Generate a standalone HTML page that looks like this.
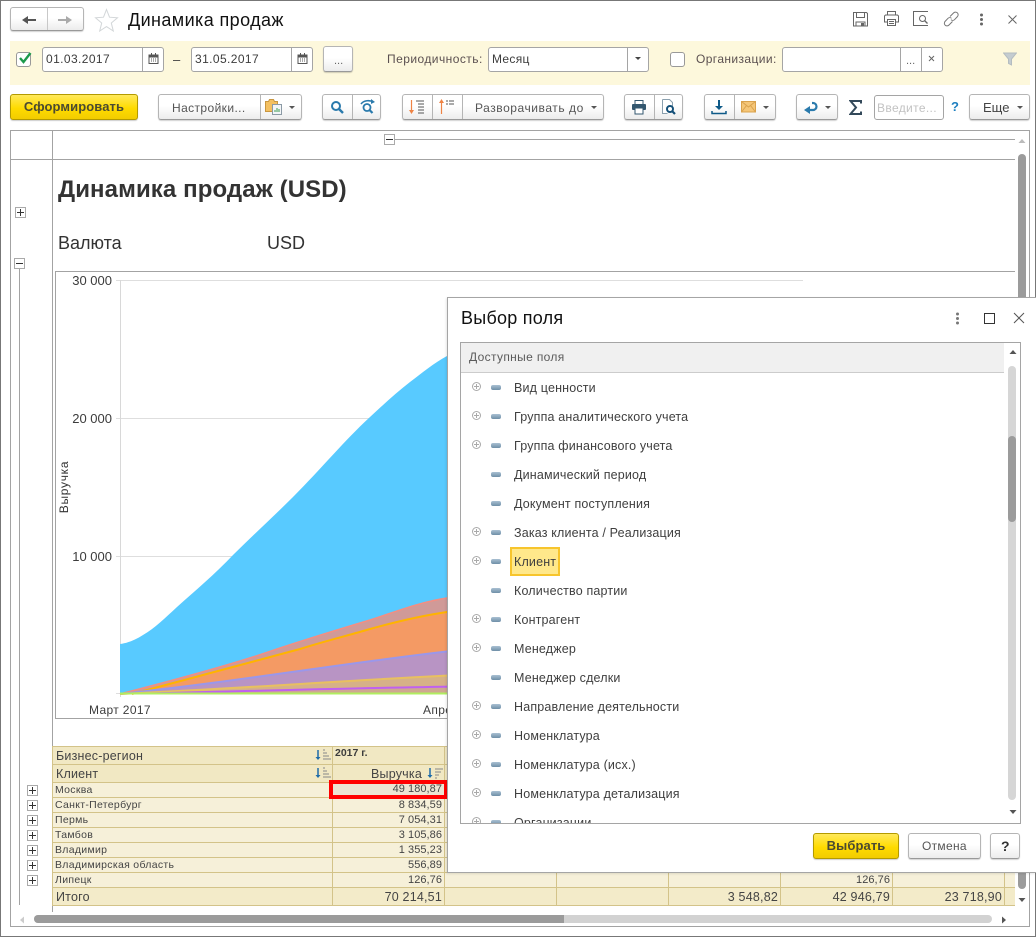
<!DOCTYPE html>
<html lang="ru"><head><meta charset="utf-8"><title>Динамика продаж</title>
<style>
html,body{margin:0;padding:0;background:#fff}
#p{position:relative;width:1036px;height:937px;overflow:hidden;background:#fff;font-family:"Liberation Sans",Arial,sans-serif;font-size:12px;color:#3c3c3c}
#p div,#p span,#p svg{position:absolute}
.t{white-space:nowrap;line-height:16px}
.b{box-sizing:border-box;border:1px solid #b5b5b5;border-bottom-color:#999;border-radius:3px;background:linear-gradient(#fff 0,#fff 45%,#ececec 100%);box-shadow:0 1px 1px rgba(0,0,0,.18)}
.y{box-sizing:border-box;border:1px solid #b39a00;border-radius:3px;background:linear-gradient(#ffe95a,#ffdb00 55%,#f2cc00);box-shadow:0 1px 1px rgba(0,0,0,.2);text-align:center;font-weight:bold;color:#4a4a32;font-size:13px;line-height:24px;letter-spacing:.1px}
.i{box-sizing:border-box;border:1px solid #a5a5a5;border-radius:3px;background:#fff}
.v{width:1px;background:#b5b5b5}
.l{background:#a3a3a3}
.c{white-space:nowrap;line-height:15px;font-size:10.5px;color:#444;letter-spacing:.3px}
.n{white-space:nowrap;line-height:15px;font-size:11px;color:#444;text-align:right;letter-spacing:.05px}
.h{white-space:nowrap;font-size:12.5px;color:#444;line-height:18px;letter-spacing:.2px}
.pb{box-sizing:border-box;width:11px;height:11px;border:1px solid #aaa;background:#fff}
.pb:before{content:"";position:absolute;left:1px;right:1px;top:4px;height:1px;background:#333}
.pb.pl:after{content:"";position:absolute;top:1px;bottom:1px;left:4px;width:1px;background:#333}
.it{white-space:nowrap;font-size:12.5px;color:#3f3f3f;line-height:16px;left:514px;letter-spacing:.17px;margin-top:1px}
.ex{box-sizing:border-box;left:472px;width:9px;height:9px;border:1px solid #aaa;border-radius:50%;background:linear-gradient(#aaa,#aaa) center/5px 1px no-repeat,linear-gradient(#aaa,#aaa) center/1px 5px no-repeat,#fff}
.mi{left:491px;width:10px;height:5px;border-radius:2px;background:linear-gradient(#a9c0d2,#6f8fa8);margin-top:-1px}
.ar{width:0;height:0;border-left:3px solid transparent;border-right:3px solid transparent;border-top:3px solid #555}
</style></head><body><div id="p">

<!-- window frame -->
<div style="left:0;top:0;width:1036px;height:1px;background:#777"></div>
<div style="left:0;top:0;width:1px;height:937px;background:#777"></div>
<div style="left:1035px;top:0;width:1px;height:937px;background:#777"></div>
<div style="left:0;top:936px;width:1036px;height:1px;background:#777"></div>

<!-- header -->
<div class="b" style="left:10px;top:7px;width:74px;height:24px"></div>
<div class="v" style="left:47px;top:8px;height:22px;background:#c8c8c8"></div>
<svg style="left:21px;top:14px" width="60" height="12"><path d="M4 6h11" stroke="#555" stroke-width="2"/><path d="M7 2L1 6l6 4z" fill="#555"/><path d="M37 6h11" stroke="#aaa" stroke-width="2"/><path d="M45 2l6 4-6 4z" fill="#aaa"/></svg>
<svg style="left:94px;top:8px" width="25" height="24"><path d="M12.500 1.500l3 7.700 8 .6-6.200 5.200 2 8-6.800-4.400-6.800 4.400 2-8L1.500 9.800l8-.6z" fill="none" stroke="#d2d6d8" stroke-width="1"/></svg>
<div class="t" style="left:128px;top:10px;font-size:18px;line-height:21px;color:#111;letter-spacing:.4px">Динамика продаж</div>

<svg style="left:852px;top:12px" width="17" height="15"><path d="M1.500.5h13l1 1v12.500h-14zM4.500.5v5h8v-5M4 14v-4h9v4" fill="none" stroke="#666"/><rect x="9" y="11" width="3" height="3" fill="#666"/></svg>
<svg style="left:883px;top:11px" width="17" height="16"><path d="M4.500 4V.5h8V4M4 11H1.500V5l1-1h12l1 1v6H13M4.500 8.500h8v6h-8z" fill="none" stroke="#666"/><path d="M6 10.500h5M6 12.500h5" stroke="#666"/></svg>
<svg style="left:913px;top:11px" width="17" height="16"><path d="M15 .5H.5v14H15" fill="none" stroke="#666"/><circle cx="9.500" cy="7.500" r="3" fill="none" stroke="#666"/><path d="M11.500 9.500l3 3" stroke="#666" stroke-width="1.300"/></svg>
<svg style="left:943px;top:11px" width="17" height="16"><path d="M7 5.500L10.500 2a2.500 2.500 0 0 1 4 3.500l-3 3.200a2.500 2.500 0 0 1-3.500 0M9.500 10.500L6 14a2.500 2.500 0 0 1-4-3.500l3-3.200a2.500 2.500 0 0 1 3.500 0" fill="none" stroke="#777"/></svg>
<svg style="left:979px;top:13px" width="5" height="13"><circle cx="2.500" cy="2" r="1.500" fill="#666"/><circle cx="2.500" cy="6.500" r="1.500" fill="#666"/><circle cx="2.500" cy="11" r="1.500" fill="#666"/></svg>
<svg style="left:1007px;top:14px" width="11" height="11"><path d="M1.500 1.500l8 8M9.500 1.500l-8 8" stroke="#666"/></svg>

<!-- filter band -->
<div style="left:10px;top:41px;width:1020px;height:44px;background:#fdf8dc"></div>
<div class="i" style="left:16px;top:52px;width:15px;height:15px;border-color:#999"></div>
<svg style="left:18px;top:51px" width="15" height="14"><path d="M2 7l3.500 4L12.500 2" fill="none" stroke="#1d9a4c" stroke-width="2.400"/></svg>
<div class="i" style="left:42px;top:47px;width:122px;height:25px"></div>
<div class="v" style="left:142px;top:48px;height:23px;background:#a5a5a5"></div>
<div class="t" style="left:46px;top:51px;letter-spacing:.4px">01.03.2017</div>
<svg style="left:148px;top:53px" width="11" height="11"><rect x="1" y="2" width="9" height="8.500" fill="none" stroke="#555"/><path d="M1 3.500h9" stroke="#555" stroke-width="2"/><path d="M3 6h1M5 6h1M7 6h1M3 8h1M5 8h1M7 8h1" stroke="#555"/><path d="M3.500 0v2M7.500 0v2" stroke="#555"/></svg>
<div class="t" style="left:173px;top:52px;font-size:13px">–</div>
<div class="i" style="left:191px;top:47px;width:122px;height:25px"></div>
<div class="v" style="left:291px;top:48px;height:23px;background:#a5a5a5"></div>
<div class="t" style="left:195px;top:51px;letter-spacing:.4px">31.05.2017</div>
<svg style="left:297px;top:53px" width="11" height="11"><rect x="1" y="2" width="9" height="8.500" fill="none" stroke="#555"/><path d="M1 3.500h9" stroke="#555" stroke-width="2"/><path d="M3 6h1M5 6h1M7 6h1M3 8h1M5 8h1M7 8h1" stroke="#555"/><path d="M3.500 0v2M7.500 0v2" stroke="#555"/></svg>
<div class="b" style="left:323px;top:46px;width:30px;height:26px"></div>
<div class="t" style="left:334px;top:53px;font-size:11px;color:#666">...</div>
<div class="t" style="left:387px;top:51px;color:#5b5050;letter-spacing:.45px">Периодичность:</div>
<div class="i" style="left:488px;top:47px;width:161px;height:25px"></div>
<div class="v" style="left:627px;top:48px;height:23px;background:#a5a5a5"></div>
<div class="t" style="left:492px;top:51px;letter-spacing:.3px">Месяц</div>
<div class="ar" style="left:635px;top:57px;border-top-color:#444"></div>
<div class="i" style="left:670px;top:52px;width:15px;height:15px;border-color:#999"></div>
<div class="t" style="left:696px;top:51px;color:#5b5050;letter-spacing:.4px">Организации:</div>
<div class="i" style="left:782px;top:47px;width:161px;height:25px"></div>
<div class="v" style="left:900px;top:48px;height:23px;background:#a5a5a5"></div>
<div class="v" style="left:921px;top:48px;height:23px;background:#a5a5a5"></div>
<div class="t" style="left:906px;top:53px;font-size:11px;color:#666">...</div>
<svg style="left:928px;top:55px" width="7" height="7"><path d="M1 1l5 5M6 1L1 6" stroke="#666"/></svg>
<svg style="left:1003px;top:52px" width="14" height="14"><path d="M.5 1h13L8.500 7v6l-3-1.500V7z" fill="#c4ccd0" stroke="#b4bcc0"/></svg>

<!-- toolbar -->
<div class="y" style="left:10px;top:94px;width:128px;height:26px">Сформировать</div>
<div class="b" style="left:158px;top:94px;width:144px;height:26px"></div>
<div class="v" style="left:260px;top:95px;height:24px"></div>
<div class="t" style="left:172px;top:100px;color:#555;letter-spacing:.4px">Настройки...</div>
<svg style="left:265px;top:98px" width="19" height="18"><path d="M.5 3.500h3l1-2h4l1 2h3v10H.5z" fill="#f4c060" stroke="#c89640"/><rect x="7.500" y="6.500" width="9" height="10" fill="#f3f5f7" stroke="#8b9aa5"/><path d="M10 14v-2M12 14v-4M14 14v-3" stroke="#3a9a50"/></svg>
<div class="ar" style="left:289px;top:106px"></div>

<div class="b" style="left:322px;top:94px;width:59px;height:26px"></div>
<div class="v" style="left:352px;top:95px;height:24px"></div>
<svg style="left:330px;top:100px" width="15" height="15"><circle cx="6" cy="6" r="4" fill="none" stroke="#2a7aac" stroke-width="2"/><path d="M9 9l4 4" stroke="#2a7aac" stroke-width="2.400"/></svg>
<svg style="left:360px;top:99px" width="16" height="16"><path d="M1 5C4 1 10 1 13 3" fill="none" stroke="#2a7aac" stroke-width="1.600"/><path d="M11 0l4 3-4 2z" fill="#2a7aac"/><circle cx="7" cy="8.500" r="3.500" fill="none" stroke="#2a7aac" stroke-width="1.800"/><path d="M9.500 11l3 3" stroke="#2a7aac" stroke-width="2.200"/></svg>

<div class="b" style="left:402px;top:94px;width:202px;height:26px"></div>
<div class="v" style="left:432px;top:95px;height:24px"></div>
<div class="v" style="left:462px;top:95px;height:24px"></div>
<svg style="left:409px;top:99px" width="18" height="16"><path d="M2.500 1v12" stroke="#ee8345" stroke-width="1.200"/><path d="M0 11l2.500 4L5 11z" fill="#ee8345"/><path d="M7 2h8M9 5h6M9 8h6M9 11h6M9 14h6" stroke="#555"/></svg>
<svg style="left:438px;top:98px" width="18" height="16"><path d="M3.500 3v13" stroke="#ee8345" stroke-width="1.200"/><path d="M1 5l2.500-4L6 5z" fill="#ee8345"/><path d="M8 3h2M8 6h2M11 3h5M11 6h5" stroke="#555"/></svg>
<div class="t" style="left:475px;top:100px;color:#555;letter-spacing:.55px">Разворачивать до</div>
<div class="ar" style="left:591px;top:106px"></div>

<div class="b" style="left:624px;top:94px;width:59px;height:26px"></div>
<div class="v" style="left:654px;top:95px;height:24px"></div>
<svg style="left:631px;top:100px" width="16" height="15"><path d="M4 4V.5h8V4" fill="#fff" stroke="#33576f"/><rect x="1" y="4" width="14" height="6" rx="1" fill="#33576f"/><rect x="4" y="8" width="8" height="6" fill="#fff" stroke="#33576f"/></svg>
<svg style="left:661px;top:99px" width="16" height="16"><path d="M1.500.5h7l3 3V7M1.500.5v14h5" fill="#fff" stroke="#8ba0ae"/><circle cx="9" cy="10" r="3" fill="#fff" stroke="#134f78" stroke-width="2"/><path d="M11 12l3 3" stroke="#134f78" stroke-width="2.200"/></svg>

<div class="b" style="left:704px;top:94px;width:72px;height:26px"></div>
<div class="v" style="left:734px;top:95px;height:24px"></div>
<svg style="left:711px;top:100px" width="16" height="15"><path d="M8 0v7" stroke="#0e5a88" stroke-width="2"/><path d="M4 6h8l-4 4z" fill="#0e5a88"/><path d="M1 11v2.500h14V11" fill="none" stroke="#0e5a88" stroke-width="1.500"/></svg>
<svg style="left:741px;top:101px" width="15" height="12"><rect x=".5" y=".5" width="14" height="10.500" fill="#f5c678" stroke="#d9a24d"/><path d="M.5.5l7 5.500 7-5.500M.5 11l5-6.500M14.500 11l-5-6.500" fill="none" stroke="#d9a24d"/></svg>
<div class="ar" style="left:763px;top:106px"></div>

<div class="b" style="left:796px;top:94px;width:42px;height:26px"></div>
<svg style="left:804px;top:100px" width="16" height="14"><path d="M5 10h4a3.500 3.500 0 0 0 0-7H8" fill="none" stroke="#2a7aac" stroke-width="2.200"/><path d="M6 6L0 10l6 4z" fill="#2a7aac"/></svg>
<div class="ar" style="left:825px;top:106px"></div>
<svg style="left:849px;top:100px" width="13" height="15"><path d="M12 3.500V1H1.500l5.500 6.500L1.500 14H12v-2.500" fill="none" stroke="#33495a" stroke-width="2"/></svg>
<div class="i" style="left:874px;top:95px;width:70px;height:25px"></div>
<div class="t" style="left:877px;top:100px;color:#c2c2c2;letter-spacing:.35px">Введите...</div>
<div class="t" style="left:951px;top:99px;color:#1d7fc0;font-size:13px;font-weight:bold">?</div>
<div class="b" style="left:969px;top:94px;width:61px;height:26px"></div>
<div class="t" style="left:983px;top:100px;font-size:13px;color:#444">Еще</div>
<div class="ar" style="left:1017px;top:106px"></div>

<!-- spreadsheet frame -->
<div class="l" style="left:10px;top:130px;width:1020px;height:1px"></div>
<div class="l" style="left:10px;top:130px;width:1px;height:797px"></div>
<div class="l" style="left:1029px;top:130px;width:1px;height:797px"></div>
<div class="l" style="left:10px;top:926px;width:1020px;height:1px"></div>
<div class="l" style="left:52px;top:130px;width:1px;height:782px"></div>
<div class="l" style="left:10px;top:159px;width:1005px;height:1px"></div>
<div class="pb" style="left:384px;top:134px"></div>
<div class="l" style="left:395px;top:139px;width:620px;height:1px"></div>

<div class="pb pl" style="left:15px;top:207px"></div>
<div class="pb" style="left:14px;top:258px"></div>
<div class="l" style="left:19px;top:269px;width:1px;height:636px"></div>

<div class="t" style="left:58px;top:176px;font-size:24px;line-height:28px;font-weight:bold;color:#333;letter-spacing:.1px">Динамика продаж (USD)</div>
<div class="t" style="left:58px;top:233px;font-size:18px;line-height:20px;color:#333">Валюта</div>
<div class="t" style="left:267px;top:233px;font-size:18px;line-height:20px;color:#333">USD</div>

<!-- chart -->
<div class="l" style="left:55px;top:271px;width:960px;height:1px"></div>
<div class="l" style="left:55px;top:271px;width:1px;height:448px"></div>
<div class="l" style="left:55px;top:718px;width:400px;height:1px"></div>
<svg style="left:0;top:0" width="1036" height="937">
<path d="M116 280.500H803M116 418.500H803M116 556.500H803M116 693.500H803" stroke="#dedede"/>
<path d="M120.500 280V697" stroke="#d8d8d8"/>
<path d="M120 644C128 643 135 640 143 635C155 628 165 618 177 607C196 590 215 574 233 555C253 535 273 517 293 497C320 470 345 440 370 417C384 404 397 392 410 382C422 373 434 363 447 356L460 349V694H120Z" fill="#58caff"/>
<path d="M120 694C190 676 240 662 277 649C310 638 340 629 370 620C395 612 420 602 447 598L460 596V694Z" fill="#d09a98"/>
<path d="M120 694C190 676 240 662 277 649C310 638 340 629 370 620C395 612 420 602 447 598L460 596" fill="none" stroke="#f48e82" stroke-width="1.500"/>
<path d="M132 694C200 676 260 660 300 649C325 641 350 635 370 629C395 622 420 616 447 612L460 611V694Z" fill="#f49a64"/>
<path d="M132 694C200 676 260 660 300 649C325 641 350 635 370 629C395 622 420 616 447 612L460 611" fill="none" stroke="#ffb400" stroke-width="2"/>
<path d="M120 694C250 680 350 662 460 650V694Z" fill="#b894c4"/>
<path d="M120 694C250 680 350 662 460 650" fill="none" stroke="#9b97ea" stroke-width="2"/>
<path d="M120 694C250 688 350 680 460 675V694Z" fill="#d6b188"/>
<path d="M120 694C250 688 350 680 460 675" fill="none" stroke="#e8c060" stroke-width="2"/>
<path d="M150 694C250 691 350 688 460 686V694Z" fill="#cfa890"/>
<path d="M150 693.500C250 691 350 688 460 686.500" fill="none" stroke="#c060f0" stroke-width="2"/>
<path d="M120 693.500H460" stroke="#b0ee60" stroke-width="2"/>
</svg>
<div class="t" style="left:52px;top:273px;width:60px;text-align:right;font-size:13px;color:#3c3c3c">30 000</div>
<div class="t" style="left:52px;top:411px;width:60px;text-align:right;font-size:13px;color:#3c3c3c">20 000</div>
<div class="t" style="left:52px;top:549px;width:60px;text-align:right;font-size:13px;color:#3c3c3c">10 000</div>
<div class="t" style="left:34px;top:479px;width:60px;text-align:center;font-size:12px;color:#333;transform:rotate(-90deg);letter-spacing:.7px">Выручка</div>
<div class="t" style="left:89px;top:702px;font-size:12px;color:#3c3c3c;letter-spacing:.35px">Март 2017</div>
<div class="t" style="left:423px;top:702px;font-size:12px;color:#3c3c3c;letter-spacing:.35px">Апрель</div>

<!-- table -->
<div style="left:53px;top:747px;width:962px;height:35px;background:#f1e8c3"></div>
<div style="left:53px;top:782px;width:962px;height:106px;background:#f6f0d9"></div>
<div style="left:53px;top:888px;width:962px;height:17px;background:#f3ebc9"></div>
<svg style="left:0;top:0" width="1036" height="937">
<g stroke="#d3c389" fill="none">
<path d="M53 746.500H1015M53 764.500H1015M53 782.500H1015M53 797.500H1015M53 812.500H1015M53 827.500H1015M53 842.500H1015M53 857.500H1015M53 872.500H1015M53 887.500H1015M53 905.500H1015"/>
<path d="M52.500 746V906M332.500 746V906M444.500 746V906M556.500 746V906M668.500 746V906M780.500 746V906M892.500 746V906M1004.500 746V906"/>
</g>
<g fill="none">
<path d="M318 750v9" stroke="#1e6ba8" stroke-width="1.500"/><path d="M315.500 757h5l-2.500 3z" fill="#1e6ba8"/><path d="M323 750h2M323 753h4M323 756h6M323 759h8" stroke="#888"/>
<path d="M318 768v9" stroke="#1e6ba8" stroke-width="1.500"/><path d="M315.500 775h5l-2.500 3z" fill="#1e6ba8"/><path d="M323 768h2M323 771h4M323 774h6M323 777h8" stroke="#888"/>
<path d="M430 768v9" stroke="#1e6ba8" stroke-width="1.500"/><path d="M427.500 775h5l-2.500 3z" fill="#1e6ba8"/><path d="M435 769h8M435 772h6M435 775h4M435 778h2" stroke="#888"/>
</g>
</svg>
<div class="h" style="left:56px;top:747px">Бизнес-регион</div>
<div class="h" style="left:56px;top:765px">Клиент</div>
<div class="t" style="left:335px;top:745px;font-size:10.500px;font-weight:bold;color:#3c3c3c">2017 г.</div>
<div class="h" style="left:371px;top:765px">Выручка</div>

<div style="left:329px;top:780px;width:119px;height:19px;box-sizing:border-box;border:4px solid #f00;background:#ece5d3"></div>

<div class="c" style="left:55px;top:783px">Москва</div>
<div class="c" style="left:55px;top:798px">Санкт-Петербург</div>
<div class="c" style="left:55px;top:813px">Пермь</div>
<div class="c" style="left:55px;top:828px">Тамбов</div>
<div class="c" style="left:55px;top:843px">Владимир</div>
<div class="c" style="left:55px;top:858px">Владимирская область</div>
<div class="c" style="left:55px;top:873px">Липецк</div>
<div class="n" style="left:341px;width:101px;top:782px">49 180,87</div>
<div class="n" style="left:341px;width:101px;top:798px">8 834,59</div>
<div class="n" style="left:341px;width:101px;top:813px">7 054,31</div>
<div class="n" style="left:341px;width:101px;top:828px">3 105,86</div>
<div class="n" style="left:341px;width:101px;top:843px">1 355,23</div>
<div class="n" style="left:341px;width:101px;top:858px">556,89</div>
<div class="n" style="left:341px;width:101px;top:873px">126,76</div>
<div class="n" style="left:789px;width:101px;top:873px">126,76</div>
<div class="h" style="left:56px;top:888px">Итого</div>
<div class="h" style="left:341px;width:101px;top:888px;text-align:right">70 214,51</div>
<div class="h" style="left:677px;width:101px;top:888px;text-align:right">3 548,82</div>
<div class="h" style="left:789px;width:101px;top:888px;text-align:right">42 946,79</div>
<div class="h" style="left:901px;width:101px;top:888px;text-align:right">23 718,90</div>

<div class="pb pl" style="left:27px;top:785px"></div>
<div class="pb pl" style="left:27px;top:800px"></div>
<div class="pb pl" style="left:27px;top:815px"></div>
<div class="pb pl" style="left:27px;top:830px"></div>
<div class="pb pl" style="left:27px;top:845px"></div>
<div class="pb pl" style="left:27px;top:860px"></div>
<div class="pb pl" style="left:27px;top:875px"></div>

<!-- main scrollbars -->
<svg style="left:1018px;top:138px" width="8" height="6"><path d="M4 1l3.500 4H.5z" fill="#bbb"/></svg>
<div style="left:1018px;top:154px;width:8px;height:735px;background:#9b9b9b;border-radius:4px"></div>
<svg style="left:1018px;top:897px" width="8" height="6"><path d="M4 5L.5 1h7z" fill="#555"/></svg>
<svg style="left:19px;top:916px" width="6" height="8"><path d="M1 4l4-3.500v7z" fill="#ccc"/></svg>
<div style="left:34px;top:915px;width:958px;height:8px;background:#d2d2d2;border-radius:4px"></div>
<div style="left:34px;top:915px;width:530px;height:8px;background:#9b9b9b;border-radius:4px 0 0 4px"></div>
<svg style="left:1001px;top:916px" width="6" height="8"><path d="M5 4L1 .5v7z" fill="#555"/></svg>

<!-- dialog -->
<div style="left:447px;top:297px;width:589px;height:576px;box-sizing:border-box;border:1px solid #a5a5a5;border-right:0;background:#fff;box-shadow:-1px 1px 2px rgba(0,0,0,.1)"></div>
<div class="t" style="left:461px;top:308px;font-size:18px;line-height:21px;color:#111;letter-spacing:.25px">Выбор поля</div>
<svg style="left:955px;top:312px" width="5" height="13"><circle cx="2.500" cy="2" r="1.500" fill="#777"/><circle cx="2.500" cy="6.500" r="1.500" fill="#777"/><circle cx="2.500" cy="11" r="1.500" fill="#777"/></svg>
<div style="left:984px;top:313px;width:9px;height:9px;box-sizing:content-box;border:1px solid #333"></div>
<svg style="left:1013px;top:312px" width="12" height="12"><path d="M1 1l10 10M11 1L1 11" stroke="#555"/></svg>

<div style="left:460px;top:342px;width:561px;height:482px;box-sizing:border-box;border:1px solid #a5a5a5;overflow:hidden;background:#fff">
<div style="left:0;top:0;width:543px;height:29px;background:#f0f0f0;border-bottom:1px solid #ccc"></div>
<div class="t" style="left:8px;top:6px;color:#5b5b5b;letter-spacing:.35px">Доступные поля</div>
<div class="t" style="left:53px;top:472px;color:#3f3f3f;font-size:12.500px;letter-spacing:.17px">Организации</div>
<div class="mi" style="left:30px;top:478px"></div>
<div class="ex" style="left:11px;top:474px"></div>
</div>
<svg style="left:1009px;top:349px" width="8" height="6"><path d="M4 1l3.500 4H.5z" fill="#555"/></svg>
<div style="left:1008px;top:366px;width:8px;height:434px;background:#d6d6d6;border-radius:4px"></div>
<div style="left:1008px;top:436px;width:8px;height:86px;background:#9b9b9b;border-radius:4px"></div>
<svg style="left:1009px;top:809px" width="8" height="6"><path d="M4 5L.5 1h7z" fill="#555"/></svg>

<div class="ex" style="top:382px"></div><div class="mi" style="top:386px"></div><div class="it" style="top:379px">Вид ценности</div>
<div class="ex" style="top:411px"></div><div class="mi" style="top:415px"></div><div class="it" style="top:408px">Группа аналитического учета</div>
<div class="ex" style="top:440px"></div><div class="mi" style="top:444px"></div><div class="it" style="top:437px">Группа финансового учета</div>
<div class="mi" style="top:473px"></div><div class="it" style="top:466px">Динамический период</div>
<div class="mi" style="top:502px"></div><div class="it" style="top:495px">Документ поступления</div>
<div class="ex" style="top:527px"></div><div class="mi" style="top:531px"></div><div class="it" style="top:524px">Заказ клиента / Реализация</div>
<div class="ex" style="top:556px"></div><div class="mi" style="top:560px"></div>
<div style="left:510px;top:547px;width:50px;height:29px;box-sizing:border-box;border:2px solid #f7c52d;background:#ffe88b"></div>
<div class="it" style="top:553px">Клиент</div>
<div class="mi" style="top:589px"></div><div class="it" style="top:582px">Количество партии</div>
<div class="ex" style="top:614px"></div><div class="mi" style="top:618px"></div><div class="it" style="top:611px">Контрагент</div>
<div class="ex" style="top:643px"></div><div class="mi" style="top:647px"></div><div class="it" style="top:640px">Менеджер</div>
<div class="mi" style="top:676px"></div><div class="it" style="top:669px">Менеджер сделки</div>
<div class="ex" style="top:701px"></div><div class="mi" style="top:705px"></div><div class="it" style="top:698px">Направление деятельности</div>
<div class="ex" style="top:730px"></div><div class="mi" style="top:734px"></div><div class="it" style="top:727px">Номенклатура</div>
<div class="ex" style="top:759px"></div><div class="mi" style="top:763px"></div><div class="it" style="top:756px">Номенклатура (исх.)</div>
<div class="ex" style="top:788px"></div><div class="mi" style="top:792px"></div><div class="it" style="top:785px">Номенклатура детализация</div>

<div class="y" style="left:813px;top:833px;width:86px;height:26px">Выбрать</div>
<div class="b" style="left:908px;top:833px;width:73px;height:26px"></div>
<div class="t" style="left:922px;top:838px;color:#555;letter-spacing:.3px">Отмена</div>
<div class="b" style="left:990px;top:833px;width:30px;height:26px"></div>
<div class="t" style="left:1001px;top:838px;font-size:14px;font-weight:bold;color:#333">?</div>

</div></body></html>
